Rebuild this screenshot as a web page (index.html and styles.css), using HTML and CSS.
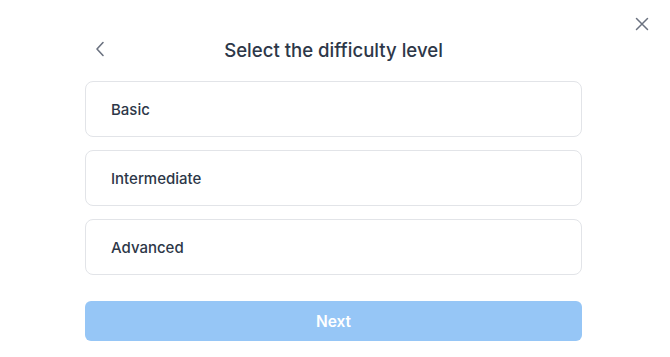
FILE: index.html
```html
<!DOCTYPE html>
<html>
<head>
<meta charset="utf-8">
<link rel="stylesheet" href="styles.css">
</head>
<body>
<div class="modal">
  <button class="close" aria-label="Close">
    <svg width="14" height="14" viewBox="0 0 14 14" fill="none" stroke="#6b7280" stroke-width="1.5" stroke-linecap="round"><path d="M1.5 1.5L12.5 12.5M12.5 1.5L1.5 12.5"/></svg>
  </button>
  <div class="header">
    <button class="back" aria-label="Back">
      <svg width="10" height="16" viewBox="0 0 10 16" fill="none" stroke="#6b7280" stroke-width="1.6" stroke-linecap="round" stroke-linejoin="round"><path d="M8 1.5L2 8L8 14.5"/></svg>
    </button>
    <h1 class="title">Select the difficulty level</h1>
  </div>
  <div class="options">
    <div class="option">Basic</div>
    <div class="option">Intermediate</div>
    <div class="option">Advanced</div>
  </div>
  <button class="next">Next</button>
</div>
</body>
</html>
```
FILE: styles.css
```css
* { box-sizing: border-box; }
html, body { margin: 0; background: #fff; }
body { font-family: Inter, "Noto Sans", sans-serif; color: #374151; }
.modal {
  position: relative;
  width: 670px;
  height: 357px;
  padding: 32px 88px 0 85px;
  display: flex;
  flex-direction: column;
}
.close {
  position: absolute;
  top: 17px;
  right: 21px;
  width: 14px;
  height: 14px;
  padding: 0;
  border: 0;
  background: none;
  display: flex;
}
.header {
  position: relative;
  height: 35px;
  display: flex;
  align-items: center;
  justify-content: center;
}
.back {
  position: absolute;
  left: 10px;
  top: 9px;
  padding: 0;
  border: 0;
  background: none;
  display: flex;
}
.title {
  margin: 0;
  font-size: 18.6px;
  font-weight: 500;
  color: #2d3748;
}
.options {
  margin-top: 14px;
  display: flex;
  flex-direction: column;
  gap: 13px;
}
.option {
  height: 56px;
  border: 1px solid #e2e4e8;
  border-radius: 8px;
  padding: 0 25px;
  display: flex;
  align-items: center;
  font-size: 15px;
  font-weight: 500;
  color: #2d3748;
}
.next {
  margin-top: 26px;
  height: 40px;
  border: 0;
  border-radius: 6px;
  background: #96c6f6;
  color: #fff;
  font-family: inherit;
  font-size: 15.5px;
  font-weight: 600;
}
```
